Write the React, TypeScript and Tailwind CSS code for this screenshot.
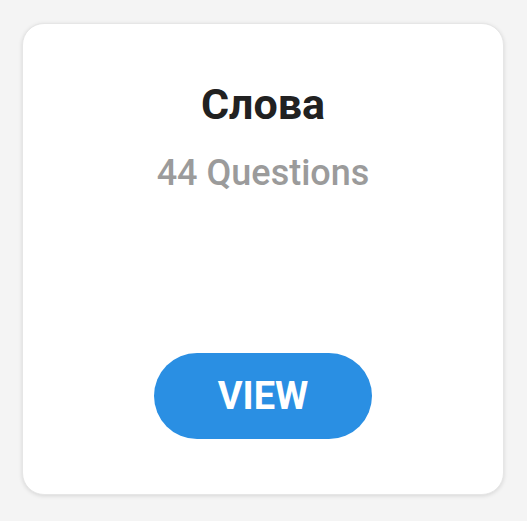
export default function App() {
  return (
    <div
      className="w-[527px] h-[521px] bg-[#f4f4f4] pt-[23px] pl-[22px]"
      style={{ fontFamily: 'Roboto, "Noto Sans", sans-serif' }}
    >
      <div className="w-[482px] h-[472px] bg-white rounded-[22px] border border-[#e6e6e6] shadow-[0_1px_4px_rgba(0,0,0,0.12)] flex flex-col items-center pt-[54px] pb-[55px]">
        <h1 className="text-[43px] leading-[52px] font-bold text-[#212121]">Слова</h1>
        <p className="mt-[22px] text-[36px] leading-[42px] font-medium text-[#9b9b9b]">44 Questions</p>
        <button className="mt-auto w-[218px] h-[86px] rounded-full bg-[#2a8fe3] text-white text-[38px] font-bold">
          VIEW
        </button>
      </div>
    </div>
  );
}
